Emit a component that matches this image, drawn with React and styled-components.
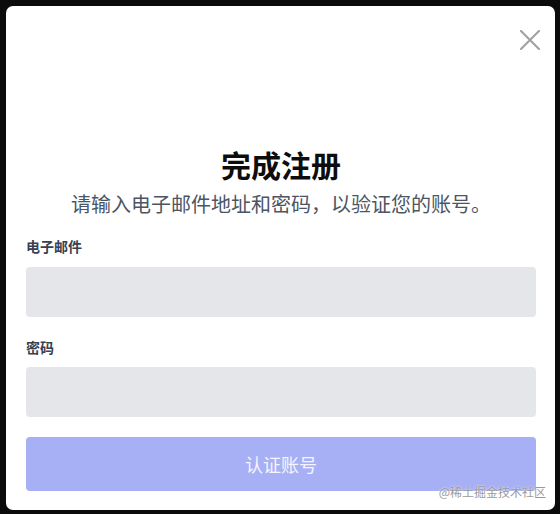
import React from "react";
import styled, { createGlobalStyle } from "styled-components";

const Global = createGlobalStyle`
  html, body { margin: 0; padding: 0; background: #0b0b0b; }
  body { font-family: "Noto Sans CJK SC", "Noto Sans", sans-serif; }
  * { box-sizing: border-box; }
`;

const Screen = styled.div`
  width: 560px;
  height: 514px;
  padding: 6px 5px 4px 6px;
  background: #0b0b0b;
`;

const Panel = styled.div`
  position: relative;
  height: 100%;
  background: #ffffff;
  border-radius: 7px;
  padding: 140px 19px 0 20px;
  display: flex;
  flex-direction: column;
`;

const CloseButton = styled.button`
  position: absolute;
  top: 23px;
  right: 14px;
  width: 22px;
  height: 22px;
  padding: 0;
  border: none;
  background: transparent;
  display: flex;
  align-items: center;
  justify-content: center;
  cursor: pointer;
`;

const Title = styled.h2`
  margin: 0;
  text-align: center;
  font-size: 30px;
  line-height: 36px;
  font-weight: 700;
  color: #0d0d0d;
`;

const Subtitle = styled.p`
  margin: 8px 0 0;
  text-align: center;
  font-size: 20px;
  line-height: 28px;
  font-weight: 400;
  color: #4b5563;
`;

const Form = styled.form`
  margin-top: 18px;
  display: flex;
  flex-direction: column;
`;

const Label = styled.label`
  display: block;
  font-size: 14px;
  line-height: 20px;
  font-weight: 700;
  color: #374151;
  margin-top: ${(p) => (p.$first ? "0" : "20px")};
  margin-bottom: ${(p) => (p.$first ? "11px" : "10px")};
`;

const Input = styled.input`
  display: block;
  width: 100%;
  height: 50px;
  border: none;
  border-radius: 4px;
  background: #e4e6ea;
  outline: none;
  padding: 0 12px;
  font-size: 16px;
  font-family: inherit;
`;

const Submit = styled.button`
  margin-top: 20px;
  width: 100%;
  height: 54px;
  border: none;
  border-radius: 4px;
  background: #a8b0f5;
  color: #f4f5ff;
  font-family: "Noto Sans CJK SC", sans-serif;
  font-size: 18px;
  line-height: 24px;
  cursor: not-allowed;
`;

const Watermark = styled.span`
  position: absolute;
  right: 9px;
  bottom: 10px;
  font-size: 12px;
  line-height: 16px;
  color: #9a9a9a;
  text-shadow: 0 0 2px rgba(255, 255, 255, 0.9);
  pointer-events: none;
`;

export default function App() {
  return (
    <>
      <Global />
      <Screen>
        <Panel>
          <CloseButton aria-label="关闭">
            <svg width="20" height="20" viewBox="0 0 20 20">
              <path
                d="M1 1 L19 19 M19 1 L1 19"
                stroke="#a3a3a3"
                strokeWidth="2.2"
                strokeLinecap="round"
              />
            </svg>
          </CloseButton>
          <Title>完成注册</Title>
          <Subtitle>请输入电子邮件地址和密码，以验证您的账号。</Subtitle>
          <Form onSubmit={(e) => e.preventDefault()}>
            <Label $first htmlFor="email">电子邮件</Label>
            <Input id="email" type="email" />
            <Label htmlFor="password">密码</Label>
            <Input id="password" type="password" />
            <Submit type="submit" disabled>认证账号</Submit>
          </Form>
          <Watermark>@稀土掘金技术社区</Watermark>
        </Panel>
      </Screen>
    </>
  );
}
